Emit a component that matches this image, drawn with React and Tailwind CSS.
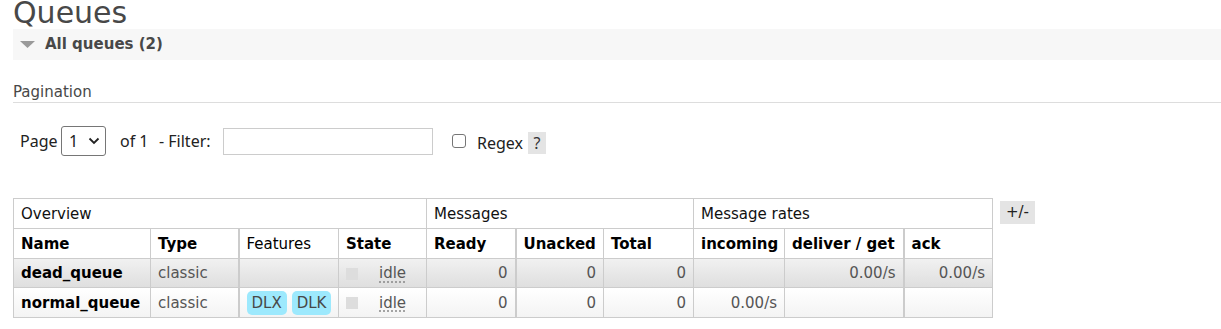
// App.jsx - RabbitMQ management: Queues list
const font = { fontFamily: '"DejaVu Sans", Verdana, sans-serif' };

const cols = [137, 88, 100, 88, 89, 88, 90, 91, 119, 89];

function Idle() {
  return (
    <div className="flex items-center">
      <span className="inline-block w-[12px] h-[12px] bg-[#dddddd]" />
      <span className="ml-[21px] text-[#555] underline decoration-dotted decoration-[#888] underline-offset-[3px]">
        idle
      </span>
    </div>
  );
}

function Badge({ children }) {
  return (
    <span className="inline-block h-[24px] leading-[24px] px-[5px] rounded-[5px] bg-[#9de9fd] text-[#484848]">
      {children}
    </span>
  );
}

export default function App() {
  const th = "border border-[#cccccc] px-[7px] pt-[2px] text-left font-bold text-black h-[30px]";
  const td = "border border-[#cccccc] px-[7px] pt-[1px] h-[29px] text-[#555]";
  const num = td + " text-right";
  const grp = "border border-[#cccccc] px-[7px] pt-[2px] text-left font-normal text-[#111] h-[30px]";

  return (
    <div className="bg-white w-[1221px] h-[329px] overflow-hidden pl-[13px]" style={font}>
      {/* title */}
      <h1 className="text-[30px] leading-[30px] -mt-[2px] text-[#484848]">Queues</h1>

      {/* section bar */}
      <div className="mt-[1px] h-[31px] bg-[#f7f7f7] flex items-center">
        <svg width="15" height="7" viewBox="0 0 15 7" className="ml-[7px]">
          <polygon points="0,0 15,0 7.5,7" fill="#9a9a9a" />
        </svg>
        <span className="ml-[10px] text-[15px] font-bold text-[#484848]">All queues (2)</span>
      </div>

      {/* pagination heading */}
      <div className="mt-[23px] text-[15px] leading-[18px] text-[#484848] pb-[1px] border-b border-[#dddddd]">
        Pagination
      </div>

      {/* pagination row */}
      <div
        className="mt-[23px] h-[30px] flex items-center text-[16px] text-[#222]"
        style={{ fontFamily: '"Noto Sans", "Open Sans", sans-serif' }}
      >
        <span className="ml-[7px] w-[35px] whitespace-nowrap">Page</span>
        <div className="ml-[6px] w-[45px] h-[30px] border border-[#767676] rounded-[3px] flex items-center bg-white">
          <span className="ml-[7px]">1</span>
          <svg width="12" height="8" viewBox="0 0 12 8" className="ml-[10px]">
            <path d="M1.5 1.5 L6 6 L10.5 1.5" fill="none" stroke="#222" strokeWidth="1.8" />
          </svg>
        </div>
        <span className="ml-[14px] w-[27px] whitespace-nowrap">of 1</span>
        <span className="ml-[12px] w-[58px] whitespace-nowrap">- Filter:</span>
        <div className="ml-[6px] w-[210px] h-[27px] border border-[#cccccc] bg-white" />
        <span className="ml-[19px] w-[14px] h-[14px] border border-[#767676] rounded-[3px] bg-white" />
        <span className="ml-[11px] mt-[3px] w-[45px] whitespace-nowrap">Regex</span>
        <span className="ml-[6px] mt-[3px] w-[18px] h-[22px] bg-[#e4e4e4] flex items-center justify-center text-[#333]">
          ?
        </span>
      </div>

      {/* table */}
      <div className="mt-[42px] flex items-start">
        <table className="table-fixed border-collapse text-[15px] w-[979px]">
          <colgroup>
            {cols.map((w, i) => (
              <col key={i} style={{ width: w }} />
            ))}
          </colgroup>
          <thead>
            <tr>
              <th colSpan={4} className={grp}>Overview</th>
              <th colSpan={3} className={grp}>Messages</th>
              <th colSpan={3} className={grp}>Message rates</th>
            </tr>
            <tr>
              <th className={th}>Name</th>
              <th className={th}>Type</th>
              <th className={th + " font-normal! border-l-2"}>Features</th>
              <th className={th}>State</th>
              <th className={th}>Ready</th>
              <th className={th + " border-l-2"}>Unacked</th>
              <th className={th}>Total</th>
              <th className={th}>incoming</th>
              <th className={th}>deliver / get</th>
              <th className={th + " border-l-2"}>ack</th>
            </tr>
          </thead>
          <tbody>
            <tr className="bg-linear-to-b from-[#f1f1f1] to-[#dedede]">
              <td className={td + " font-bold text-black"}>dead_queue</td>
              <td className={td}>classic</td>
              <td className={td + " border-l-2"}></td>
              <td className={td}>
                <Idle />
              </td>
              <td className={num}>0</td>
              <td className={num + " border-l-2"}>0</td>
              <td className={num}>0</td>
              <td className={num}></td>
              <td className={num}>0.00/s</td>
              <td className={num + " border-l-2"}>0.00/s</td>
            </tr>
            <tr className="bg-linear-to-b from-[#ffffff] to-[#f3f3f3]">
              <td className={td + " h-[30px] font-bold text-black"}>normal_queue</td>
              <td className={td}>classic</td>
              <td className={td + " border-l-2"}>
                <div className="flex gap-[5px]">
                  <Badge>DLX</Badge>
                  <Badge>DLK</Badge>
                </div>
              </td>
              <td className={td}>
                <Idle />
              </td>
              <td className={num}>0</td>
              <td className={num + " border-l-2"}>0</td>
              <td className={num}>0</td>
              <td className={num}>0.00/s</td>
              <td className={num}></td>
              <td className={num + " border-l-2"}></td>
            </tr>
          </tbody>
        </table>
        <button className="ml-[7px] mt-[3px] w-[35px] h-[23px] bg-[#e4e4e4] text-[15px] text-[#222] flex items-center justify-center">
          +/-
        </button>
      </div>
    </div>
  );
}
